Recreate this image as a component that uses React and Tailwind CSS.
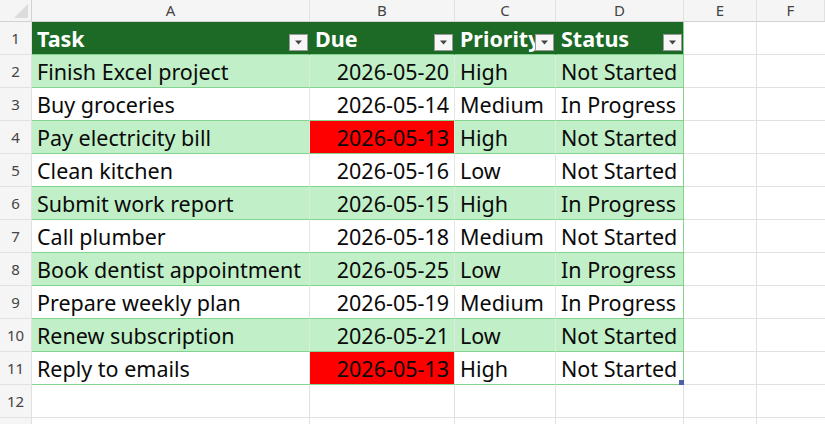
const ROWS = [
  ['Finish Excel project', '2026-05-20', 'High', 'Not Started'],
  ['Buy groceries', '2026-05-14', 'Medium', 'In Progress'],
  ['Pay electricity bill', '2026-05-13', 'High', 'Not Started', true],
  ['Clean kitchen', '2026-05-16', 'Low', 'Not Started'],
  ['Submit work report', '2026-05-15', 'High', 'In Progress'],
  ['Call plumber', '2026-05-18', 'Medium', 'Not Started'],
  ['Book dentist appointment', '2026-05-25', 'Low', 'In Progress'],
  ['Prepare weekly plan', '2026-05-19', 'Medium', 'In Progress'],
  ['Renew subscription', '2026-05-21', 'Low', 'Not Started'],
  ['Reply to emails', '2026-05-13', 'High', 'Not Started', true],
]

const COLS = 'grid grid-cols-[32px_278px_145px_101px_128px_73px_1fr]'

function FilterBtn() {
  return (
    <span className="absolute right-[1px] bottom-[3px] w-[19px] h-[17px] bg-[#f7f7f7] border border-[#9a9a9a] flex items-center justify-center">
      <svg width="9" height="5" viewBox="0 0 9 5">
        <path d="M1 0.5 L8 0.5 L4.5 4.5 Z" fill="#444" />
      </svg>
    </span>
  )
}

function RowNum({ n }) {
  return (
    <div className="h-[33px] bg-[#f5f5f5] border-r border-b border-[#e1e1e1] flex items-end justify-center pb-[5px] text-[15px] text-[#444]">
      {n}
    </div>
  )
}

export default function App() {
  return (
    <div className="w-[825px] h-[424px] overflow-hidden bg-white font-['Noto_Sans',sans-serif] text-[#0a0a0a]">
      {/* column letters */}
      <div className={`${COLS} h-[22px] bg-[#f5f5f5] border-b border-[#d2d2d2] text-[15px] text-[#444]`}>
        <div className="relative border-r border-[#d2d2d2]">
          <svg className="absolute right-[3px] bottom-[3px]" width="14" height="14" viewBox="0 0 14 14">
            <path d="M14 0 L14 14 L0 14 Z" fill="#dcdcdc" />
          </svg>
        </div>
        {['A', 'B', 'C', 'D', 'E', 'F'].map((c) => (
          <div key={c} className="flex items-center justify-center border-r border-[#e1e1e1] leading-none">
            {c}
          </div>
        ))}
      </div>

      {/* table header */}
      <div className={`${COLS} text-[21.5px]`}>
        <RowNum n={1} />
        {['Task', 'Due', 'Priority', 'Status'].map((h, i) => (
          <div
            key={h}
            className={`relative h-[33px] bg-[#1c6a26] text-white font-bold px-[5px] pt-[2px] flex items-center border-b border-[#84d48f] ${i === 3 ? 'border-r border-r-[#84d48f]' : 'border-r border-r-[#1c6a26]'}`}
          >
            {h}
            <FilterBtn />
          </div>
        ))}
        <div className="h-[33px] border-r border-b border-[#e1e1e1]" />
        <div className="h-[33px] border-b border-[#e1e1e1]" />
      </div>

      {ROWS.map(([task, due, pri, status, late], i) => {
        const band = i % 2 === 0 ? 'bg-[#c1f0c8]' : 'bg-white'
        const cell = `h-[33px] px-[5px] pt-[2px] flex items-center border-b border-[#84d48f] whitespace-nowrap ${band}`
        return (
          <div key={task} className={`${COLS} text-[21.5px]`}>
            <RowNum n={i + 2} />
            <div className={`${cell} border-r border-r-[#dfe9e0]`}>{task}</div>
            <div className={`${cell} justify-end border-r border-r-[#dfe9e0] ${late ? '!bg-[#ff0000]' : ''}`}>{due}</div>
            <div className={`${cell} border-r border-r-[#dfe9e0]`}>{pri}</div>
            <div className={`${cell} relative border-r border-r-[#84d48f]`}>
              {status}
              {i === ROWS.length - 1 && (
                <span className="absolute right-[-1px] bottom-[-1px] w-[5px] h-[5px] bg-[#4c5fae]" />
              )}
            </div>
            <div className="h-[33px] border-r border-b border-[#e1e1e1]" />
            <div className="h-[33px] border-b border-[#e1e1e1]" />
          </div>
        )
      })}

      {[12, null].map((n, k) => (
        <div key={k} className={`${COLS} text-[21.5px]`}>
          <RowNum n={n} />
          {[0, 1, 2, 3, 4].map((c) => (
            <div key={c} className="h-[33px] border-r border-b border-[#e1e1e1]" />
          ))}
          <div className="h-[33px] border-b border-[#e1e1e1]" />
        </div>
      ))}
    </div>
  )
}
